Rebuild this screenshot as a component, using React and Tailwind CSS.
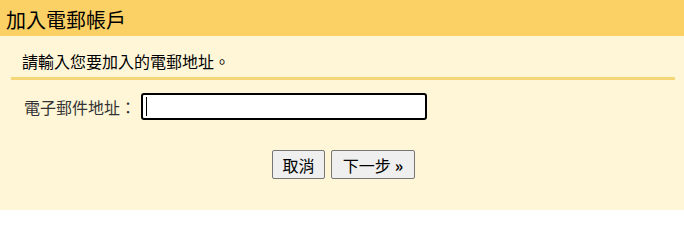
export default function App() {
  const font = { fontFamily: '"Noto Sans CJK TC", "Noto Sans", sans-serif' };
  return (
    <div className="w-[684px] h-[210px] bg-[#fff6d8] flex flex-col" style={font}>
      <div className="h-9 bg-[#fbd165] flex items-center pl-[6px] pt-[3px]">
        <span className="text-[20px] leading-none text-black">加入電郵帳戶</span>
      </div>
      <div className="pl-[22px] pt-[13px] h-[41px]">
        <span className="text-[16px] leading-none text-black">請輸入您要加入的電郵地址。</span>
      </div>
      <div className="ml-[11px] mr-[9px] h-[3px] bg-[#f6d778]" />
      <div className="flex items-center pl-[24px] mt-[13px]">
        <span className="text-[16px] leading-none text-[#333] w-[117px]">電子郵件地址：</span>
        <div className="w-[286px] h-[27px] border-2 border-black rounded-[3px] bg-white flex items-center pl-[3px]">
          <span className="w-px h-[19px] bg-black" />
        </div>
      </div>
      <div className="flex pl-[272px] gap-[6px] mt-[30px]">
        <button className="w-[53px] h-[29px] border border-[#767676] rounded-[2px] bg-[#efefef] text-[16px] leading-none text-black flex items-center justify-center">取消</button>
        <button className="w-[84px] h-[29px] border border-[#767676] rounded-[2px] bg-[#efefef] text-[16px] leading-none text-black flex items-center justify-center gap-[4px]">
          <span>下一步</span><span className="font-bold">»</span>
        </button>
      </div>
    </div>
  );
}
